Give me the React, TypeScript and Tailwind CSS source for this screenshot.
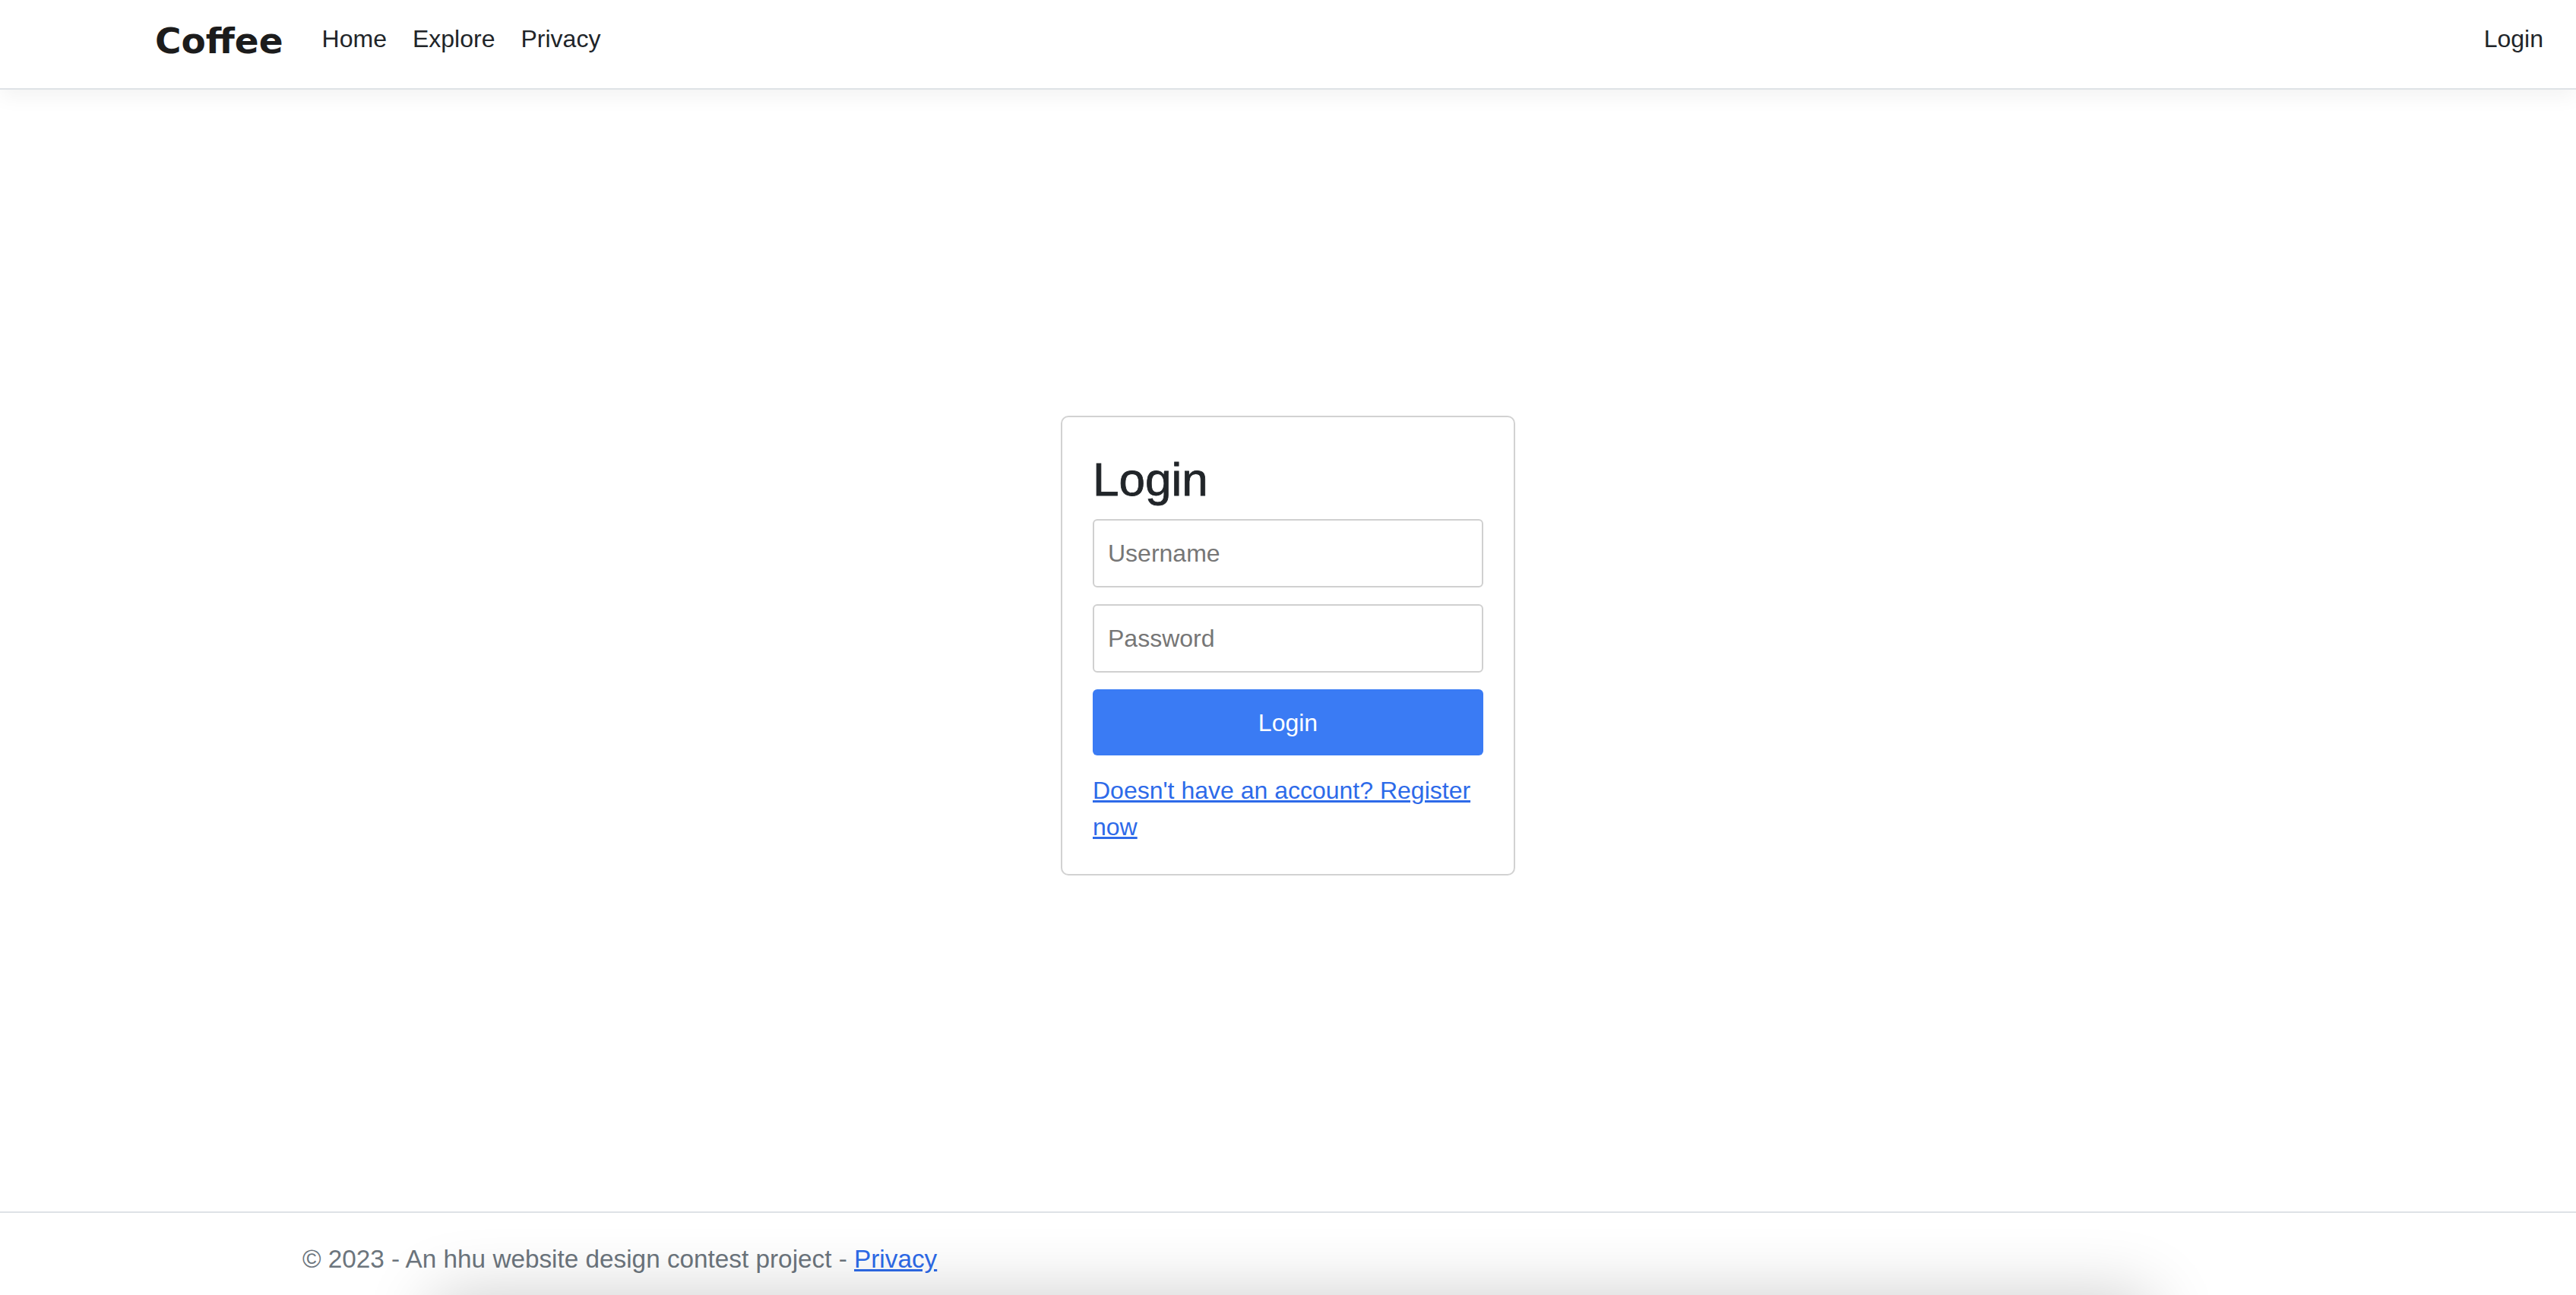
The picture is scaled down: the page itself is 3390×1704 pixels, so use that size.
import React, { useState } from 'react';

const sans = "font-['Liberation_Sans',Arial,sans-serif]";

function Header() {
  return (
    <header className="relative z-10 h-[118px] shrink-0 border-b-2 border-[#dee2e6] bg-white shadow-[0_9px_26px_rgba(0,0,0,0.05)]">
      <div className="flex items-start pt-[27px] pl-[204px] pr-[26px]">
        <a href="#" className="font-['DejaVu_Sans',Verdana,sans-serif] text-[47px] font-bold leading-[54px] text-[#1c1c1c]">
          Coffee
        </a>
        <nav className={`ml-[34px] flex ${sans} text-[32px] leading-[48px] text-[#212529]`}>
          <a href="#" className="px-[17px]">Home</a>
          <a href="#" className="px-[17px]">Explore</a>
          <a href="#" className="px-[17px]">Privacy</a>
        </nav>
        <a href="#" className={`ml-auto px-[17px] ${sans} text-[32px] leading-[48px] text-[#212529]`}>
          Login
        </a>
      </div>
    </header>
  );
}

function LoginCard() {
  const [username, setUsername] = useState('');
  const [password, setPassword] = useState('');

  return (
    <form
      onSubmit={e => e.preventDefault()}
      className={`w-[598px] rounded-[10px] border-2 border-[#d2d2d2] bg-white px-[40px] pt-[45px] pb-[38px] ${sans}`}
    >
      <h3 className="text-[62px] leading-[74px] font-normal text-[#212529] [-webkit-text-stroke:0.8px_#212529]">Login</h3>
      <input
        type="text" placeholder="Username" value={username} onChange={e => setUsername(e.target.value)}
        className="mt-[15px] block h-[90px] w-full rounded-[6px] border-2 border-[#d0d0d0] pl-[18px] text-[32px] text-[#212529] outline-none placeholder:text-[#767676]"
      />
      <input
        type="password" placeholder="Password" value={password} onChange={e => setPassword(e.target.value)}
        className="mt-[22px] block h-[90px] w-full rounded-[6px] border-2 border-[#d0d0d0] pl-[18px] text-[32px] text-[#212529] outline-none placeholder:text-[#767676]"
      />
      <button type="submit" className="mt-[22px] block h-[87px] w-full rounded-[6px] bg-[#3a7bf4] text-[32px] text-white">
        Login
      </button>
      <p className="mt-[22px] text-[32px] leading-[48px]">
        <a href="#" className="text-[#2d6ae9] underline">Doesn't have an account? Register now</a>
      </p>
    </form>
  );
}

export default function App() {
  return (
    <div className="flex h-screen flex-col overflow-hidden bg-white">
      <Header />
      <main className="flex flex-1 items-center justify-center pb-[13px]">
        <LoginCard />
      </main>
      <footer className="relative h-[110px] shrink-0 overflow-hidden border-t-2 border-[#dee2e6]">
        <div className={`pt-[37px] pl-[398px] ${sans} text-[33.3px] leading-[48px] text-[#6c757d]`}>
          © 2023 - An hhu website design contest project - <a href="#" className="text-[#2d6ae9] underline">Privacy</a>
        </div>
        <div className="absolute top-full left-[570px] right-[560px] h-[200px] shadow-[0_0_90px_0_rgba(0,0,0,0.2)]" />
      </footer>
    </div>
  );
}
